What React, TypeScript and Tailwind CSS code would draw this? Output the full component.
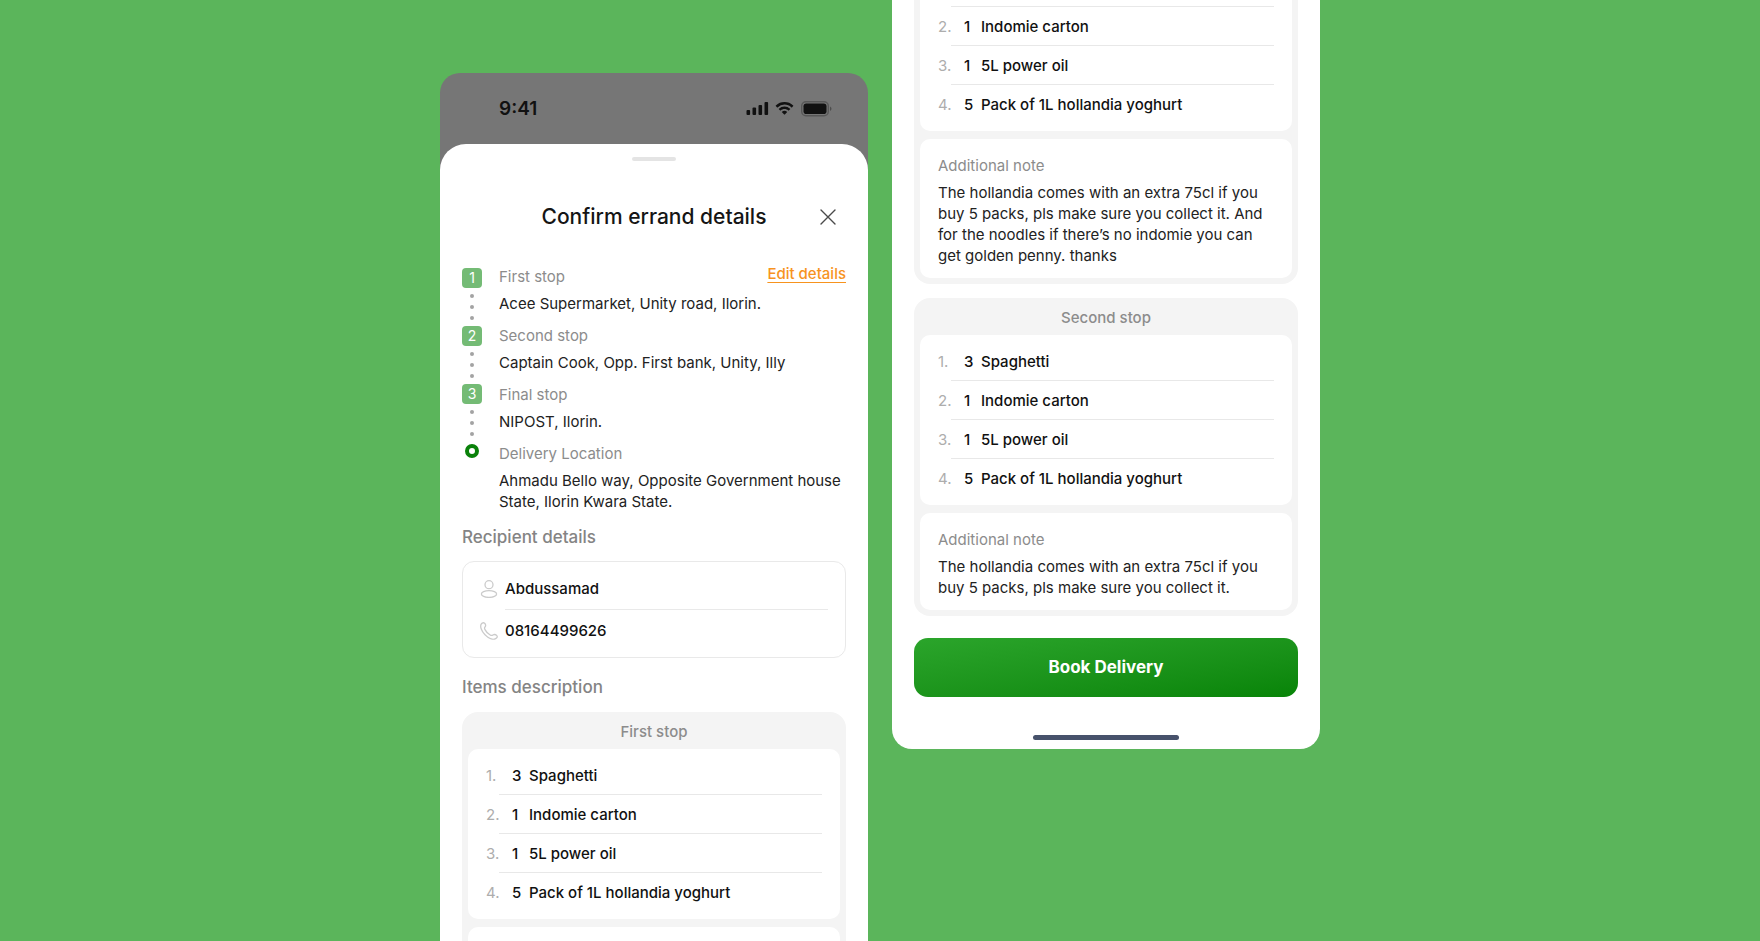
import type { ReactNode } from "react";

type Item = { qty: number; name: string };
type StopItems = { title: string; items: Item[]; note: string };

const shoppingList: Item[] = [
  { qty: 3, name: "Spaghetti" },
  { qty: 1, name: "Indomie carton" },
  { qty: 1, name: "5L power oil" },
  { qty: 5, name: "Pack of 1L hollandia yoghurt" },
];

const stopItems: StopItems[] = [
  {
    title: "First stop",
    items: shoppingList,
    note: "The hollandia comes with an extra 75cl if you buy 5 packs, pls make sure you collect it. And for the noodles if there’s no indomie you can get golden penny. thanks",
  },
  {
    title: "Second stop",
    items: shoppingList,
    note: "The hollandia comes with an extra 75cl if you buy 5 packs, pls make sure you collect it.",
  },
];

const route = [
  { label: "First stop", address: "Acee Supermarket, Unity road, Ilorin." },
  { label: "Second stop", address: "Captain Cook, Opp. First bank, Unity, Illy" },
  { label: "Final stop", address: "NIPOST, Ilorin." },
  {
    label: "Delivery Location",
    address: "Ahmadu Bello way, Opposite Government house State, Ilorin Kwara State.",
  },
];

function StatusBar() {
  return (
    <div className="flex h-[71px] items-center justify-between pl-[59px] pr-9 text-[#111]">
      <span className="text-[19px] font-semibold leading-6">9:41</span>
      <svg width="86" height="16" viewBox="0 0 86 16" aria-hidden>
        <g fill="currentColor">
          <rect x="0.5" y="9" width="3.6" height="5" rx="1" />
          <rect x="6.5" y="6.5" width="3.6" height="7.5" rx="1" />
          <rect x="12.5" y="4" width="3.6" height="10" rx="1" />
          <rect x="18.5" y="1" width="3.6" height="13" rx="1" />
          <path d="M38.5 3.6c2.6 0 5 1 6.9 2.8.1.1.3.1.5 0l1.3-1.4c.1-.1.1-.4 0-.5a12.6 12.6 0 0 0-17.4 0c-.1.1-.1.4 0 .5l1.3 1.4c.2.1.4.1.5 0a10 10 0 0 1 6.9-2.8z" />
          <path d="M38.5 8.1c1.4 0 2.8.5 3.8 1.5.2.1.4.1.5 0l1.3-1.4c.2-.1.2-.4 0-.5a8.2 8.2 0 0 0-11.2 0c-.2.1-.2.4 0 .5l1.3 1.4c.1.1.3.1.5 0 1-1 2.4-1.5 3.8-1.5z" />
          <path d="M41 11.2c.2-.2.2-.4 0-.5a3.9 3.9 0 0 0-5 0c-.2.1-.2.3 0 .5l2.2 2.3c.2.2.4.2.6 0z" />
          <rect x="57.5" y="2.5" width="23" height="10.5" rx="2.8" />
          <path d="M84 5.5v4.5c.9-.4 1.5-1.3 1.5-2.25S84.9 5.9 84 5.5z" opacity="0.4" />
        </g>
        <rect x="55.7" y="0.7" width="26.6" height="14.1" rx="4.3" fill="none" stroke="currentColor" strokeWidth="1.4" opacity="0.3" />
      </svg>
    </div>
  );
}

function UserIcon() {
  return (
    <svg width="18" height="18" viewBox="0 0 18 18" fill="none" stroke="#cbcbcb" strokeWidth="1.3" aria-hidden>
      <circle cx="9" cy="4.7" r="4" />
      <ellipse cx="9" cy="14" rx="7.6" ry="3.4" />
    </svg>
  );
}

function PhoneIcon() {
  return (
    <svg width="18" height="18" viewBox="0 0 18 18" fill="none" stroke="#cbcbcb" strokeWidth="1.3" strokeLinejoin="round" aria-hidden>
      <path d="M4.6 1.2C5.8 2.2 6 4 5 5c-.7.8-.6 1.600 0 2.600 1 2 3 4.200 5.200 5.400 1 .6 1.800.6 2.700 0 1.300-.8 2.900-.5 3.900.6s.2 2.400-1.200 3.100c-2.600 1.300-7.100-.4-10.600-3.900S-.2 4.600 1.200 2.200c.8-1.400 2.300-1.900 3.400-1z" />
    </svg>
  );
}

function RouteTimeline() {
  return (
    <div className="flex w-5 shrink-0 flex-col items-center pt-[5px]" aria-hidden>
      {[1, 2, 3].map((n) => (
        <div key={n} className="flex flex-col items-center">
          <span className="flex size-5 items-center justify-center rounded-[4px] bg-[#74bb75] text-sm leading-5 text-white">
            {n}
          </span>
          <div className="flex h-[38px] flex-col items-center justify-center gap-[7px]">
            <i className="size-1 rounded-full bg-[#a3a3a3]" />
            <i className="size-1 rounded-full bg-[#a3a3a3]" />
            <i className="size-1 rounded-full bg-[#a3a3a3]" />
          </div>
        </div>
      ))}
      <span className="mt-0.5 size-[14px] rounded-full border-4 border-[#0a810a]" />
    </div>
  );
}

function SectionTitle({ children }: { children: ReactNode }) {
  return <h2 className="text-[17px] font-medium leading-6 text-[#848484]">{children}</h2>;
}

function ItemsCard({ title, items, note }: StopItems) {
  return (
    <section className="rounded-2xl bg-[#f4f4f4] px-1.5 pb-1.5 pt-[9px]">
      <h3 className="mb-[7px] text-center font-medium text-[#8c8c8c]">{title}</h3>
      <ol className="rounded-[10px] bg-white px-[18px] py-[7px]">
        {items.map((item, i) => (
          <li key={item.name} className="group flex h-[39px]">
            <span className="w-[13px] py-[9px] text-[#adadad]">{i + 1}.</span>
            <div className="flex flex-1 border-b border-[#e8e8e8] py-[9px] pl-[13px] font-medium text-[#111] group-last:border-transparent">
              <span className="w-[17px]">{item.qty}</span>
              <span>{item.name}</span>
            </div>
          </li>
        ))}
      </ol>
      <div className="mt-2 rounded-[10px] bg-white px-[18px] pb-3 pt-4">
        <h4 className="text-[#8c8c8c]">Additional note</h4>
        <p className="mt-1.5 text-[#222]">{note}</p>
      </div>
    </section>
  );
}

function ItemsDescription() {
  return (
    <div className="flex flex-col gap-[14px]">
      {stopItems.map((stop) => (
        <ItemsCard key={stop.title} {...stop} />
      ))}
    </div>
  );
}

function DetailsScreen() {
  return (
    <article className="mt-[73px] w-[428px] shrink-0 self-start rounded-[20px] bg-[#767676]">
      <StatusBar />
      <div className="rounded-t-[26px] bg-white px-[22px] pb-10 pt-[13px]">
        <div className="mx-auto h-1 w-11 rounded-full bg-[#e4e4e4]" />
        <header className="mt-[42px] grid grid-cols-[1fr_auto_1fr] items-center">
          <h1 className="col-start-2 text-[21px] font-medium leading-7 text-[#151515]">Confirm errand details</h1>
          <button type="button" aria-label="Close" className="mr-2.5 justify-self-end">
            <svg width="16" height="16" viewBox="0 0 16 16" fill="none" stroke="#4a4a4a" strokeWidth="1.4" strokeLinecap="round" aria-hidden>
              <path d="M1 1l14 14M15 1L1 15" />
            </svg>
          </button>
        </header>

        <div className="mt-8 flex gap-[17px]">
          <RouteTimeline />
          <dl className="flex flex-1 flex-col gap-[11px]">
            {route.map((stop, i) => (
              <div key={stop.label}>
                {i === 0 ? (
                  <dt className="flex h-6 items-end justify-between text-[#8c8c8c]">
                    {stop.label}
                    <a href="#edit" className="self-start font-medium text-[#f7931e] underline underline-offset-3">
                      Edit details
                    </a>
                  </dt>
                ) : (
                  <dt className="text-[#8c8c8c]">{stop.label}</dt>
                )}
                <dd className="mt-1.5 text-[#222]">{stop.address}</dd>
              </div>
            ))}
          </dl>
        </div>

        <div className="mt-[13px]">
          <SectionTitle>Recipient details</SectionTitle>
        </div>
        <div className="mt-3 rounded-xl border border-[#e9e9e9] px-[17px] py-4 font-medium text-[#111]">
          <div className="flex gap-[7px]">
            <span className="flex h-[21px] items-center">
              <UserIcon />
            </span>
            <p className="flex-1 border-b border-[#e9e9e9] pb-2.5">Abdussamad</p>
          </div>
          <div className="flex gap-[7px] pt-2.5">
            <span className="flex h-[21px] items-center">
              <PhoneIcon />
            </span>
            <p>08164499626</p>
          </div>
        </div>

        <div className="mb-[13px] mt-[17px]">
          <SectionTitle>Items description</SectionTitle>
        </div>
        <ItemsDescription />
      </div>
    </article>
  );
}

function BookingScreen() {
  return (
    <div className="flex h-screen w-[428px] shrink-0 flex-col justify-end pb-48">
      <article className="shrink-0 rounded-b-[20px] bg-white px-[22px] pb-[9px]">
        <ItemsDescription />
        <button
          type="button"
          className="mt-[22px] h-[59px] w-full rounded-[14px] bg-linear-to-br from-[#2ba52b] to-[#078407] text-[17px] font-bold text-white"
        >
          Book Delivery
        </button>
        <div className="mx-auto mt-[38px] h-[5px] w-[146px] rounded-full bg-[#47526b]" />
      </article>
    </div>
  );
}

export default function App() {
  return (
    <main className="flex h-screen justify-center gap-6 overflow-hidden bg-[#5bb55b] font-['Inter',sans-serif] text-[15px] leading-[21px]">
      <DetailsScreen />
      <BookingScreen />
    </main>
  );
}
